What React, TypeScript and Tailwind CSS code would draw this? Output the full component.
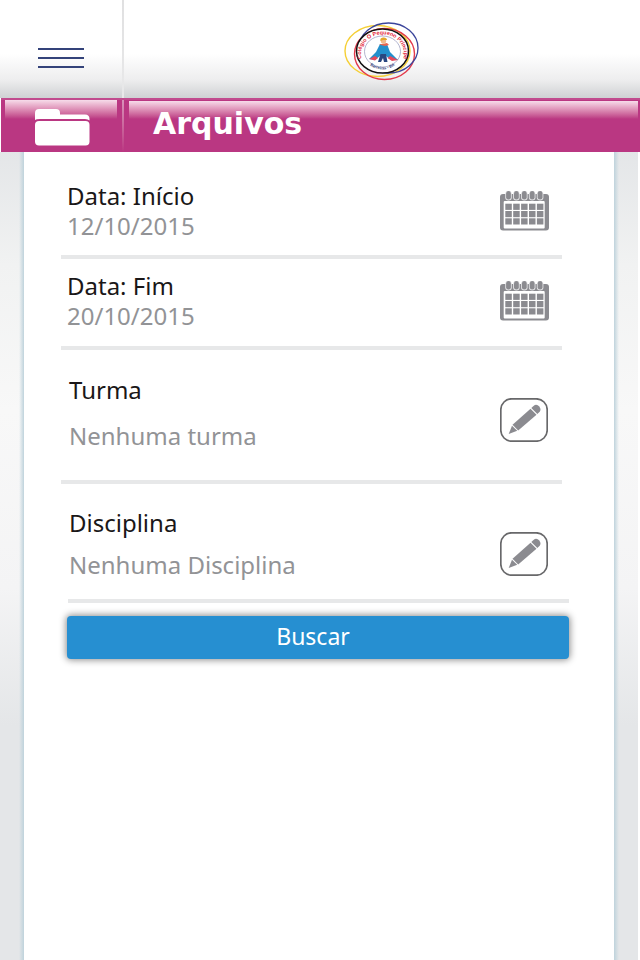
import React from "react";

function SchoolLogo() {
  return (
    <svg viewBox="0 0 100 80" className="h-20 w-[100px]" role="img" aria-label="Colégio O Pequeno Príncipe">
      <defs>
        <path id="name-arc" d="M32.500 51 A21.500 19.500 0 1 1 72.500 51" />
        <path id="city-arc" d="M34 50 Q52 69 71 50" />
      </defs>
      <ellipse cx="47.500" cy="41" rx="32.500" ry="25.500" fill="none" stroke="#f5cf35" strokeWidth="1.400" />
      <ellipse cx="54.500" cy="44" rx="30" ry="25.500" fill="none" stroke="#e33a4c" strokeWidth="1.400" />
      <ellipse cx="58.500" cy="38" rx="29.500" ry="25" fill="none" stroke="#3b459b" strokeWidth="1.300" />
      <ellipse cx="52.500" cy="41" rx="26" ry="22" fill="#fff" stroke="#111" strokeWidth="1.500" />
      <ellipse cx="52.500" cy="41.500" rx="18" ry="15.500" fill="none" stroke="#9295b9" strokeWidth="0.700" />
      <text fontFamily="'Liberation Sans', sans-serif" fontWeight="700" fontSize="5.500" fill="#e3283b">
        <textPath href="#name-arc" startOffset="50%" textAnchor="middle">Colégio O Pequeno Príncipe</textPath>
      </text>
      <text fontFamily="'Liberation Sans', sans-serif" fontWeight="700" fontSize="4" fill="#343c78">
        <textPath href="#city-arc" startOffset="50%" textAnchor="middle">Barreiras - BA</textPath>
      </text>
      <path d="M50 34 L46 42 L39 49 L45 50 L50 46 L56 46 L61 50 L68 50 L60 42 L57 34 Z" fill="#2390cc" />
      <path d="M39 49 L45 46 L48 48 L45 50.500 Z M68 50 L60 46 L57.500 48 L62 51 Z" fill="#e54a5b" />
      <path d="M50.500 44 H56 L57.500 52 H54 L53 48 L51 52 H48 Z" fill="#29477f" />
      <path d="M49 34.500 L57 33 L59 35 L55 36 Z" fill="#e9664f" />
      <circle cx="53.500" cy="31" r="2.700" fill="#efb88b" />
      <path d="M50.500 31 C49 26.500 57.500 26.500 57 30 L53 30 Z" fill="#e5a62d" />
    </svg>
  );
}

function FolderIcon() {
  return (
    <svg viewBox="0 0 55 37" className="h-[37px] w-[55px]" fill="#fff" aria-hidden="true">
      <path d="M0 11 V4 Q0 0 4 0 H21 Q25 0 25 4 V5.500 H50 Q54.500 5.500 54.500 10 V11.500 Q53 10 50 10 H5 Q1 10 0 11 Z" />
      <rect x="0" y="12" width="54.500" height="24.500" rx="4" />
    </svg>
  );
}

function CalendarIcon() {
  return (
    <svg viewBox="0 0 49 40" className="h-10 w-[49px]" aria-hidden="true">
      <rect x="0" y="3" width="49" height="36.500" rx="3" fill="#8b8b90" />
      <rect x="3.700" y="10" width="41" height="27.500" rx="1" fill="#fff" />
      {[8.5, 16.4, 24.3, 32.2, 40.1].map((x) => (
        <g key={x}>
          <rect x={x - 3.3} y="0" width="6.600" height="9.500" rx="3.300" fill="#e3e3e5" />
          <rect x={x - 2.4} y="0" width="4.800" height="8.600" rx="2.400" fill="#8b8b90" />
          {[12.7, 20, 27.3].map((y) => (
            <rect key={y} x={x - 3.2} y={y} width="6.500" height="6.200" fill="#8b8b90" />
          ))}
        </g>
      ))}
    </svg>
  );
}

function EditIcon() {
  return (
    <svg viewBox="0 0 48 44" className="h-11 w-12" aria-hidden="true">
      <rect x="0.800" y="0.800" width="46.400" height="42.400" rx="11" fill="#fff" stroke="#68686a" strokeWidth="1.700" />
      <g fill="#8b8b90">
        <path d="M8.700 36 L12 27.800 L17.200 32.700 Z" />
        <path d="M12.500 26.800 L30.500 10.700 L36.500 16.800 L18.200 32.500 Z" />
        <path d="M31.300 10 L33.500 8 Q36.500 5.500 39.300 8.500 Q41.500 11.500 39.700 13.700 L37.300 16 Z" />
      </g>
    </svg>
  );
}

type FieldProps = {
  id: string;
  label: string;
  value: string;
  kind: "date" | "choice";
  row: string;
  stack: string;
  action: string;
};

function Field({ id, label, value, kind, row, stack, action }: FieldProps) {
  return (
    <div className={`flex border-b-4 border-[#e7e8e9] ${row}`}>
      <div className={`flex min-w-0 flex-1 flex-col ${stack}`}>
        <label htmlFor={id} className="block h-[30px] leading-[30px] text-[#1a1718]">{label}</label>
        <input id={id} type="text" readOnly defaultValue={value} className="block h-[30px] w-full bg-transparent leading-[30px] text-[#929396] outline-none" />
      </div>
      <button type="button" aria-label={`Alterar ${label}`} className={`shrink-0 cursor-pointer ${action}`}>
        {kind === "date" ? <CalendarIcon /> : <EditIcon />}
      </button>
    </div>
  );
}

const gloss = "bg-linear-to-b from-[#f6dcea] to-[#ba3782]";

export default function App() {
  return (
    <div className="flex min-h-screen flex-col bg-white font-['Noto_Sans','Open_Sans',sans-serif] text-[24px]">
      <header className="flex h-[98px] bg-linear-to-b from-white from-55% via-[#ededee] via-82% to-[#cfd1d3]">
        <div className="flex w-[122px] items-center justify-center pt-[18px]">
          <button type="button" aria-label="Menu" className="flex w-[46px] cursor-pointer flex-col gap-[7px]">
            <span className="h-[2px] bg-[#34437a]" />
            <span className="h-[2px] bg-[#34437a]" />
            <span className="h-[2px] bg-[#34437a]" />
          </button>
        </div>
        <div className="w-[2px] bg-linear-to-b from-[#e0e0e1] to-[#e9e9ea]" />
        <div className="flex flex-1 justify-center pt-[10px] pr-1">
          <SchoolLogo />
        </div>
      </header>

      <div className="ml-px flex h-[54px] border-t-2 border-[#c14b8e] bg-[#ba3782]">
        <div className="flex w-[121px] flex-col pr-[5px] pl-1">
          <div className={`h-[19px] ${gloss}`} />
          <div className="-mt-[10px] flex justify-center pl-[2px]">
            <FolderIcon />
          </div>
        </div>
        <div className="w-[2px] bg-linear-to-b from-[#d891b9] to-[#ba3782]" />
        <div className="flex-1 pt-px pr-[2px] pl-[5px]">
          <div className={`h-[18px] ${gloss}`} />
          <h1 className="-mt-[14px] pl-6 font-['DejaVu_Sans',sans-serif] text-[30px] leading-[38px] font-bold text-white">Arquivos</h1>
        </div>
      </div>

      <main className="flex flex-1 border-r-2 border-white bg-[linear-gradient(to_bottom,#e4e6e8_0%,#f1f2f2_14%,#f8f8f8_32%,#f4f4f5_54%,#e4e6e8_71%)]">
        <div className="flex w-6 justify-end">
          <div className="w-[5px] bg-linear-to-r from-transparent to-[#bfd3dc]" />
        </div>
        <form className="min-w-0 flex-1 bg-white pr-[45px] pl-[37px]" onSubmit={(e) => e.preventDefault()}>
          <div className="mr-[7px]">
            <Field id="inicio" label="Data: Início" value="12/10/2015" kind="date" row="pt-[29px] pr-[13px] pb-[14px] pl-[6px]" stack="" action="self-center" />
            <Field id="fim" label="Data: Fim" value="20/10/2015" kind="date" row="pt-3 pr-[13px] pb-[15px] pl-[6px]" stack="" action="self-center" />
            <Field id="turma" label="Turma" value="Nenhuma turma" kind="choice" row="pt-[25px] pr-[14px] pb-[29px] pl-2" stack="gap-4" action="mb-[9px] self-end" />
          </div>
          <div className="ml-[7px]">
            <Field id="disciplina" label="Disciplina" value="Nenhuma Disciplina" kind="choice" row="pt-6 pr-[21px] pb-[19px] pl-px" stack="gap-3" action="mb-1 self-end" />
          </div>
          <div className="ml-[6px]">
            <button type="submit" className="mt-[13px] h-[43px] w-full cursor-pointer rounded bg-[#268fd1] pr-[10px] pb-[3px] text-[23px] leading-[40px] text-white shadow-[0_0_7px_1px_rgba(0,0,0,0.45)]">Buscar</button>
          </div>
        </form>
        <div className="flex w-6">
          <div className="w-[5px] bg-linear-to-l from-transparent to-[#bfd3dc]" />
        </div>
      </main>
    </div>
  );
}
